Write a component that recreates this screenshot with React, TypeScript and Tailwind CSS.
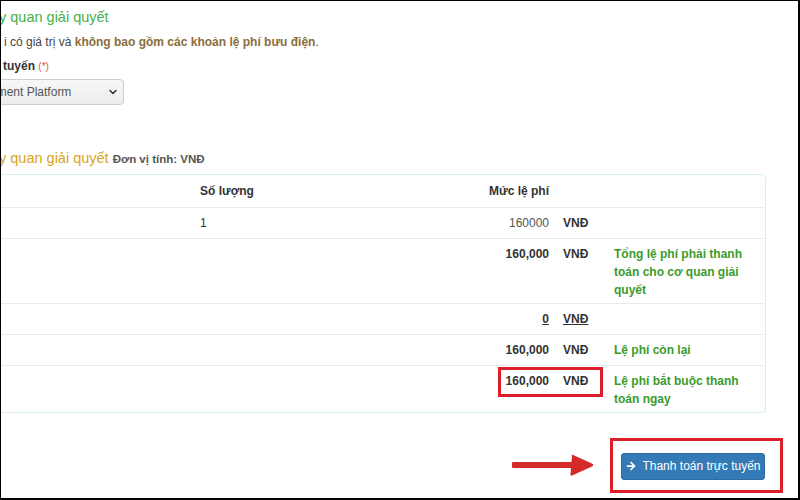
import { ChevronDown, ArrowRight } from "lucide-react"

type Row = {
  qty?: string
  amount: string
  bold?: boolean
  underline?: boolean
  note?: string
}

const rows: Row[] = [
  { qty: "1", amount: "160000" },
  { amount: "160,000", bold: true, note: "Tổng lệ phí phải thanh toán cho cơ quan giải quyết" },
  { amount: "0", bold: true, underline: true },
  { amount: "160,000", bold: true, note: "Lệ phí còn lại" },
  { amount: "160,000", bold: true, note: "Lệ phí bắt buộc thanh toán ngay" },
]

function FeeTable() {
  return (
    <div className="-ml-[11px] w-[776px] overflow-hidden rounded-[4px] border border-[#dcefef]">
      <table className="w-full table-fixed border-collapse text-[12px] leading-[18px]">
        <colgroup>
          <col className="w-[201px]" />
          <col className="w-[228px]" />
          <col className="w-[137px]" />
          <col className="w-[49px]" />
          <col />
        </colgroup>
        <thead>
          <tr className="h-[32px] font-bold text-[#333]">
            <th className="px-2 py-[6px]"></th>
            <th className="px-2 py-[6px] text-left">Số lượng</th>
            <th className="px-2 py-[6px] text-right">Mức lệ phí</th>
            <th></th>
            <th></th>
          </tr>
        </thead>
        <tbody>
          {rows.map((r, i) => (
            <tr key={i} className="border-t border-[#eaeaea] align-top">
              <td className="px-2 py-[6px]"></td>
              <td className="px-2 py-[6px] text-[#333]">{r.qty}</td>
              <td
                className={
                  "px-2 py-[6px] text-right " +
                  (r.bold ? "font-bold text-[#333] " : "text-[#555] ") +
                  (r.underline ? "underline" : "")
                }
              >
                {r.amount}
              </td>
              <td className={"pl-[6px] py-[6px] font-bold text-[#333] " + (r.underline ? "underline" : "")}>
                VNĐ
              </td>
              <td className="pl-2 pr-3 pt-[6px] pb-[4px] font-bold text-[#3a9b2c]">{r.note}</td>
            </tr>
          ))}
        </tbody>
      </table>
    </div>
  )
}

export default function App() {
  return (
    <div className="relative h-[500px] w-[800px] overflow-hidden border-t border-l border-r-2 border-b-2 border-black bg-white font-['Liberation_Sans',Arial,sans-serif] text-[#333]">
      <div className="pt-[6px]">
        <h3 className="-ml-[2px] text-[14.5px] leading-[20px] text-[#45b148]">y quan giải quyết</h3>

        <p className="mt-[6px] pl-[3px] text-[12px] leading-[18px] text-[#444]">
          i có giá trị và{" "}
          <span className="font-bold text-[#8a6d3b]">không bao gồm các khoản lệ phí bưu điện</span>.
        </p>

        <div className="mt-[6px] pl-[2px] text-[12px] leading-[18px] font-bold text-[#333]">
          tuyến <span className="text-[10px] font-normal text-[#d9534f]">(*)</span>
        </div>

        <div className="mt-[3px] -ml-[40px] flex h-[26px] w-[163px] items-center justify-between rounded-[4px] border border-[#cfcfcf] bg-gradient-to-b from-[#f7f7f7] to-[#ececec] pr-[4px]">
          <span className="pl-[14px] text-[12px] text-[#555]">Payment Platform</span>
          <ChevronDown className="h-[12px] w-[12px] text-[#333]" strokeWidth={3} />
        </div>

        <h3 className="mt-[43px] -ml-[2px] text-[14.5px] leading-[20px] text-[#d9a521]">
          y quan giải quyết{" "}
          <span className="text-[11.5px] font-bold text-[#555]">Đơn vị tính: VNĐ</span>
        </h3>

        <div className="mt-[5px]">
          <FeeTable />
        </div>

        <div className="mt-[25px] flex items-center justify-end gap-[15px] pr-[15px]">
          <svg width="83" height="24" viewBox="0 0 83 24" className="shrink-0">
            <rect x="0" y="9" width="64" height="6" rx="1" fill="#d42a2a" />
            <path d="M60 1.5 L80 10.5 Q82.5 12 80 13.5 L60 22.5 Q58 23.2 58.5 21 L60 3 Q59.5 0.8 60 1.5 Z" fill="#d42a2a" />
          </svg>
          <div className="border-[3px] border-[#dc1f2a] pt-[12px] pb-[10px] pl-[8px] pr-[15px]">
            <button className="flex h-[27px] w-[144px] items-center justify-center gap-[5px] rounded-[3px] border border-[#2e6da4] bg-[#337ab7] text-[12px] text-white">
              <ArrowRight className="h-[12px] w-[12px]" strokeWidth={3.5} />
              Thanh toán trực tuyến
            </button>
          </div>
        </div>
      </div>

      <div className="pointer-events-none absolute left-[497px] top-[366px] h-[30px] w-[105px] border-[3px] border-[#dc1f2a]" />
    </div>
  )
}
